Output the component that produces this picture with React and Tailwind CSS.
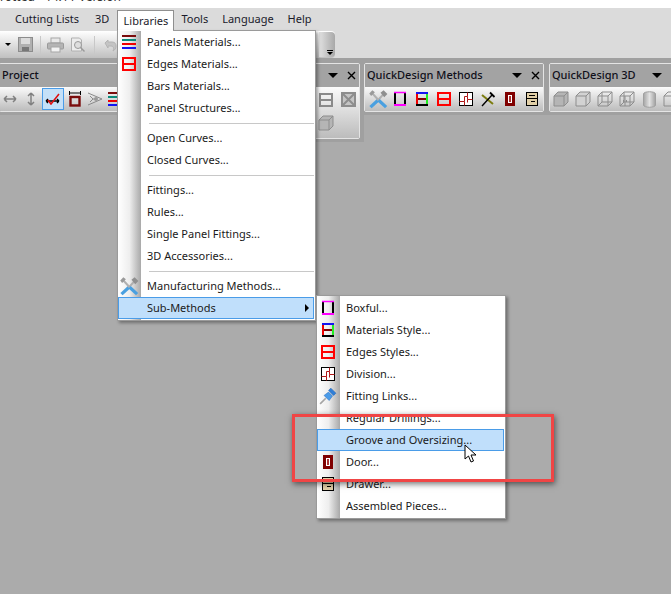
import React from "react";

const font = { fontFamily: '"Noto Sans", sans-serif' };

//small svg icons, all drawn on a 16x16 grid
const Svg = ({ children, size = 16 }) => (
  <svg width={size} height={size} viewBox="0 0 16 16" fill="none" className="shrink-0">
    {children}
  </svg>
);

const PanelsIcon = () => (
  <Svg>
    <rect x="1" y="1" width="14" height="2" fill="#7a0c0c" />
    <rect x="1" y="5" width="14" height="2" fill="#0b8a7a" />
    <rect x="1" y="9" width="14" height="2" fill="#f00000" />
    <rect x="1" y="13" width="14" height="2" fill="#1414f0" />
  </Svg>
);

const EdgesIcon = ({ color = "#ff0000" }) => (
  <Svg>
    <rect x="2" y="2" width="12" height="12" stroke={color} strokeWidth="2" />
    <path d="M2 8h12" stroke={color} strokeWidth="2" />
  </Svg>
);

const BoxfulIcon = () => (
  <Svg>
    <path d="M3 1v14M13 1v14" stroke="#000" strokeWidth="2" />
    <path d="M2 1.5h12" stroke="#ff00ff" strokeWidth="1.5" />
    <path d="M2 14h12" stroke="#ff00ff" strokeWidth="2" />
  </Svg>
);

const StyleIcon = () => (
  <Svg>
    <path d="M2 14h12" stroke="#000" strokeWidth="2" />
    <path d="M2 8h12" stroke="#800000" strokeWidth="2" />
    <path d="M3 2v11" stroke="#f00000" strokeWidth="2" />
    <path d="M13 2v11" stroke="#22ee22" strokeWidth="2" />
    <path d="M2 2h12" stroke="#1414f0" strokeWidth="2" />
  </Svg>
);

const DivisionIcon = () => (
  <Svg>
    <rect x="1.5" y="1.5" width="13" height="13" stroke="#000" fill="#fff" />
    <path d="M1.5 10.5h5v4M6.5 10.5v-5h3v-4M9.5 5.5v3h5M9.5 8.5v3" stroke="#b01818" strokeWidth="1" />
  </Svg>
);

const PinIcon = () => (
  <Svg size={18}>
    <path d="M1 15l5-5" stroke="#a5a5a5" strokeWidth="1.5" />
    <path d="M4.5 7.5l4-3 3.5 3.5-3 4z" fill="#4a9be8" stroke="#2b6fc0" strokeWidth="0.5" />
    <path d="M8.5 3l2-2 4.5 4.5-2 2z" fill="#2f7fd8" stroke="#1d5fae" strokeWidth="0.5" />
  </Svg>
);

const DoorIcon = () => (
  <Svg>
    <rect x="3" y="1" width="10" height="14" fill="#800000" />
    <rect x="6" y="4" width="4" height="8" fill="#fff" />
    <rect x="7" y="5" width="2" height="6" fill="#a33" />
  </Svg>
);

const DrawerIcon = () => (
  <Svg>
    <rect x="2.5" y="1.5" width="11" height="13" fill="#e2d0a8" stroke="#000" />
    <path d="M2.5 7.5h11M5 4.5h6M7 10.5h4" stroke="#000" />
  </Svg>
);

const ToolsIcon = () => (
  <Svg size={20}>
    <path d="M8 9L2 14.5" stroke="#4aa0e0" strokeWidth="2.6" />
    <path d="M8 9l4-4.5" stroke="#b0b0b0" strokeWidth="1.6" />
    <path d="M10 3l2.5-2 3 3-2.5 2.5z" fill="#8f8f8f" />
    <path d="M3 3l5.5 6" stroke="#b0b0b0" strokeWidth="1.6" />
    <path d="M1 3.5l2.5-2.5 2 1.5-3 3z" fill="#9a9a9a" />
    <path d="M8.5 9l6 5.5" stroke="#4aa0e0" strokeWidth="2.6" />
  </Svg>
);

const ScrewIcon = () => (
  <Svg>
    <path d="M2 4l11 9" stroke="#7d7d10" strokeWidth="2" />
    <path d="M2 15L12.5 3.5" stroke="#000" strokeWidth="1.4" />
    <path d="M10 1.5l4.5 4.5" stroke="#000" strokeWidth="1.8" />
  </Svg>
);

const Cube = ({ fill = "none", back, doors }) => (
  <Svg>
    {back && <path d="M5 1v10h10M5 11l-4 4" stroke="#8d8d8d" />}
    <path d="M1 5l4-4h10v10l-4 4H1z" fill={fill} stroke="#8d8d8d" />
    <path d="M1 5h10v10M11 5l4-4" stroke="#8d8d8d" />
    {doors && <path d="M6 5v10M4.5 9v2M7.5 9v2" stroke="#8d8d8d" />}
  </Svg>
);

const Cylinder = () => (
  <svg width="13" height="17" viewBox="0 0 13 17" className="shrink-0">
    <defs>
      <linearGradient id="cyl" x1="0" x2="1" y1="0" y2="0">
        <stop offset="0" stopColor="#a5a5a5" />
        <stop offset="0.5" stopColor="#e2e2e2" />
        <stop offset="1" stopColor="#a0a0a0" />
      </linearGradient>
    </defs>
    <path d="M0.5 3c0-3 12-3 12 0v11c0 3-12 3-12 0z" fill="url(#cyl)" stroke="#a0a0a0" />
  </svg>
);

const Caret = () => <span className="block w-0 h-0 border-x-[5px] border-x-transparent border-t-[5px] border-t-black" />;

const X = () => (
  <svg width="9" height="9" viewBox="0 0 9 9" className="block shrink-0">
    <path d="M1 1l7 7M8 1l-7 7" stroke="#000" strokeWidth="1.4" />
  </svg>
);

const Cell = ({ children }) => <span className="w-[22px] h-[22px] shrink-0 flex items-center justify-center">{children}</span>;

const Item = ({ label, icon, active, arrow }) => (
  <div
    className={`relative h-[22px] flex items-center text-[11px] text-[#1a1a1a] ${
      active ? "bg-[#c0dffb] border border-[#4a9ce8] -ml-[1px] pl-[28px]" : "pl-[28px]"
    }`}
  >
    {icon && <span className="absolute left-0 top-[2px] w-[20px] h-[18px] flex items-center justify-center">{icon}</span>}
    <span className="truncate">{label}</span>
    {arrow && <span className="absolute right-[4px] top-[6px] w-0 h-0 border-y-[4px] border-y-transparent border-l-[4px] border-l-black" />}
  </div>
);

const Sep = () => (
  <div className="h-[8px] flex items-center pl-[30px]">
    <div className="w-full h-[1px] bg-[#c8c8c8]" />
  </div>
);

const Strip = () => <div className="absolute left-0 top-0 bottom-0 w-[23px] bg-gradient-to-r from-white via-[#eeeeee] to-[#a9a9a9]" />;

const Panel = ({ title, className, bodyClass = "", controls = true, children }) => (
  <div className={`shrink-0 flex flex-col border border-[#e4e4e4] rounded-[2px] overflow-hidden ${className}`}>
    <div className="h-[23px] shrink-0 bg-[#a3a3a3] flex items-center pl-[2px] pr-[3px] text-[11px] font-medium text-[#10101a]">
      <span className="flex-1 whitespace-nowrap">{title}</span>
      {controls && <span className="mr-[9px]"><Caret /></span>}
      {controls && <X />}
    </div>
    <div className={`flex-1 bg-gradient-to-b from-[#fbfbfb] to-[#bcbcbc] ${bodyClass}`}>{children}</div>
  </div>
);

const SmallArrow = ({ vertical }) => (
  <svg width="16" height="16" viewBox="0 0 16 16" style={vertical ? { transform: "rotate(90deg)" } : undefined}>
    <path d="M2 8h12M2 8l3-3M2 8l3 3M14 8l-3-3M14 8l-3 3" stroke="#808080" strokeWidth="1.5" fill="none" />
  </svg>
);

export default function App() {
  return (
    <div style={font} className="relative w-[671px] h-[594px] overflow-hidden bg-[#ababab]">
      {/* clipped title bar */}
      <div className="h-[8px] bg-white overflow-hidden text-[12px] leading-[4px] text-[#333] whitespace-nowrap">
        <span className="block -mt-[5px]">rotted - 14.11 Version</span>
      </div>

      {/* menu bar */}
      <div className="h-[23px] bg-[#dbdbdb] flex items-center text-[11px] text-[#1a1a2a] pl-[15px]">
        <span className="mr-[16px]">Cutting Lists</span>
        <span className="mr-[8px]">3D</span>
        <span className="mr-[7px] self-end h-[21px] w-[57px] flex items-center justify-center bg-white border border-b-0 border-[#8f8f8f]">Libraries</span>
        <span className="mr-[14px]">Tools</span>
        <span className="mr-[14px]">Language</span>
        <span>Help</span>
      </div>

      {/* main toolbar */}
      <div className="h-[27px] bg-[#dbdbdb]">
        <div className="w-[335px] h-[27px] rounded-r-[4px] bg-gradient-to-b from-white to-[#c0c0c0] flex items-center pl-[5px]">
          <span className="w-0 h-0 border-x-[3px] border-x-transparent border-t-[3px] border-t-black" />
          <svg width="15" height="15" viewBox="0 0 15 15" className="ml-[7px]">
            <rect x="0.5" y="0.5" width="14" height="14" fill="#b0b0b0" stroke="#8c8c8c" />
            <rect x="3" y="1" width="9" height="6" fill="#dcdcdc" />
            <rect x="4" y="10" width="7" height="4" fill="#777" />
          </svg>
          <span className="w-[1px] h-[18px] bg-[#c8c8c8] ml-[7px]" />
          <svg width="17" height="16" viewBox="0 0 17 16" className="ml-[6px]">
            <rect x="4" y="1" width="9" height="5" fill="#e8e8e8" stroke="#a5a5a5" />
            <rect x="0.5" y="6" width="16" height="6" rx="1" fill="#b4b4b4" stroke="#9a9a9a" />
            <rect x="4" y="10" width="9" height="5" fill="#f2f2f2" stroke="#a5a5a5" />
          </svg>
          <svg width="16" height="16" viewBox="0 0 16 16" className="ml-[6px]">
            <path d="M1.5 1h8l2 2v11h-10z" fill="#ececec" stroke="#b0b0b0" />
            <circle cx="8" cy="8" r="3.5" fill="#dedede" stroke="#9a9a9a" />
            <path d="M10.5 10.5l4 4" stroke="#9a9a9a" strokeWidth="1.5" />
          </svg>
          <span className="w-[1px] h-[18px] bg-[#c8c8c8] ml-[8px]" />
          <svg width="13" height="14" viewBox="0 0 13 14" className="ml-[9px]">
            <path d="M1 5l3-3v2h4c3 0 4 2 4 4s-1 4-3 5c1-2 1-5-2-5H4v2z" fill="#c4c4c4" stroke="#b4b4b4" />
          </svg>
          <span className="ml-auto w-[16px] h-[25px] rounded-r-[4px] bg-gradient-to-r from-[#e2e2e2] to-[#a8a8a8] flex flex-col items-center justify-end pb-[2px] pl-[6px]">
            <span className="w-[6px] h-[1px] bg-black mb-[1px]" />
            <span className="w-0 h-0 border-x-[3px] border-x-transparent border-t-[3px] border-t-black" />
          </span>
        </div>
      </div>

      {/* docked toolbars */}
      <div className="h-[5px] bg-[#a0a0a0]" />
      <div className="flex items-start -ml-[1px]">
        <div className="bg-[#a0a0a0] pb-[3px] pr-[2px]">
          <Panel title="Project" controls={false} className="w-[120px] h-[49px]" bodyClass="flex items-center">
            <span className="w-[20px] flex justify-center shrink-0"><SmallArrow /></span>
            <Cell><SmallArrow vertical /></Cell>
            <span className="w-[22px] h-[22px] shrink-0 bg-[#c4e0f8] border border-[#4a9ce8] flex items-center justify-center">
              <svg width="16" height="12" viewBox="0 0 16 12">
                <path d="M1 8h13M1 8l2-2M1 8l2 2M14 8l-2-2M14 8l-2 2" stroke="#000" strokeWidth="1.3" fill="none" />
                <path d="M3 7l3 4 8-10" stroke="#e01010" strokeWidth="1.6" fill="none" />
              </svg>
            </span>
            <Cell>
              <svg width="12" height="16" viewBox="0 0 12 16">
                <rect x="1.5" y="6" width="9" height="8.5" stroke="#7a0c0c" strokeWidth="2.4" fill="none" />
                <path d="M0 2h12M0.5 0v4M11.5 0v4" stroke="#000" />
              </svg>
            </Cell>
            <span className="-mx-[2px]">
              <Cell>
                <svg width="16" height="16" viewBox="0 0 16 16">
                  <path d="M1 2l7 3 7 3-7 3-7 3M3 5l3 3-3 3M6 8h4" stroke="#8a8a8a" fill="none" />
                  <circle cx="9" cy="8" r="2" fill="#999" />
                </svg>
              </Cell>
            </span>
            <Cell><PanelsIcon /></Cell>
          </Panel>
        </div>
        <div className="bg-[#a0a0a0] pb-[3px] pr-[4px]">
          <Panel title="" className="w-[239px] h-[76px]" bodyClass="flex flex-col items-end">
            <span className="h-[25px] flex items-center">
              <Cell><EdgesIcon color="#8a8a8a" /></Cell>
              <Cell>
                <svg width="15" height="15" viewBox="0 0 15 15">
                  <rect x="1" y="1" width="13" height="13" fill="#c4c4c4" stroke="#8d8d8d" strokeWidth="2" />
                  <path d="M1 1l13 13M14 1L1 14" stroke="#8d8d8d" strokeWidth="2" />
                </svg>
              </Cell>
            </span>
            <span className="flex items-center mr-[22px]">
              <Cell><Cube fill="#b5b5b5" /></Cell>
            </span>
          </Panel>
        </div>
        <div className="bg-[#a0a0a0] pb-[3px] pr-[5px]">
          <Panel title="QuickDesign Methods" className="w-[180px] h-[49px]" bodyClass="flex items-center pl-[2px]">
            <Cell><ToolsIcon /></Cell>
            <Cell><BoxfulIcon /></Cell>
            <Cell><StyleIcon /></Cell>
            <Cell><EdgesIcon /></Cell>
            <Cell><DivisionIcon /></Cell>
            <Cell><ScrewIcon /></Cell>
            <Cell><DoorIcon /></Cell>
            <Cell><DrawerIcon /></Cell>
          </Panel>
        </div>
        <div className="bg-[#a0a0a0] pb-[3px]">
          <Panel title="QuickDesign 3D" className="w-[135px] h-[49px]" bodyClass="flex items-center">
            <Cell><Cube fill="#b5b5b5" /></Cell>
            <Cell><Cube fill="#d2d2d2" /></Cell>
            <Cell><Cube back /></Cell>
            <Cell><Cube back doors /></Cell>
            <Cell><Cylinder /></Cell>
            <Cell><Cube /></Cell>
          </Panel>
        </div>
      </div>

      {/* libraries menu */}
      <div className="absolute left-[117px] top-[30px] w-[199px] h-[291px] bg-white border border-[#9a9a9a] shadow-[2px_2px_3px_rgba(0,0,0,0.35)]">
        <Strip />
        <div className="relative pl-[1px] pr-[1px]">
          <Item label="Panels Materials..." icon={<PanelsIcon />} />
          <Item label="Edges Materials..." icon={<EdgesIcon />} />
          <Item label="Bars Materials..." />
          <Item label="Panel Structures..." />
          <Sep />
          <Item label="Open Curves..." />
          <Item label="Closed Curves..." />
          <Sep />
          <Item label="Fittings..." />
          <Item label="Rules..." />
          <Item label="Single Panel Fittings..." />
          <Item label="3D Accessories..." />
          <Sep />
          <Item label="Manufacturing Methods..." icon={<ToolsIcon />} />
          <Item label="Sub-Methods" active arrow />
        </div>
      </div>
      {/* joins the open Libraries tab to its menu */}
      <div className="absolute left-[118px] top-[30px] w-[55px] h-[1px] bg-white" />

      {/* sub-methods menu */}
      <div className="absolute left-[316px] top-[295px] w-[190px] h-[224px] bg-white border border-[#9a9a9a] shadow-[2px_2px_3px_rgba(0,0,0,0.35)]">
        <Strip />
        <div className="relative pt-[1px] pl-[1px] pr-[1px]">
          <Item label="Boxful..." icon={<BoxfulIcon />} />
          <Item label="Materials Style..." icon={<StyleIcon />} />
          <Item label="Edges Styles..." icon={<EdgesIcon />} />
          <Item label="Division..." icon={<DivisionIcon />} />
          <Item label="Fitting Links..." icon={<PinIcon />} />
          <Item label="Regular Drillings..." />
          <Item label="Groove and Oversizing..." active />
          <Item label="Door..." icon={<DoorIcon />} />
          <Item label="Drawer..." icon={<DrawerIcon />} />
          <Item label="Assembled Pieces..." />
        </div>
      </div>

      {/* red callout drawn over the screenshot */}
      <div className="absolute left-[292px] top-[414px] w-[262px] h-[68px] border-[3px] border-[#f04545] shadow-[1px_2px_6px_rgba(0,0,0,0.55)]" />

      {/* mouse cursor */}
      <svg width="14" height="20" viewBox="0 0 14 20" className="absolute left-[464px] top-[444px]">
        <path d="M1 1v14l3.5-3 2.5 6 2.5-1-2.5-6h5z" fill="#fff" stroke="#000" />
      </svg>
    </div>
  );
}
